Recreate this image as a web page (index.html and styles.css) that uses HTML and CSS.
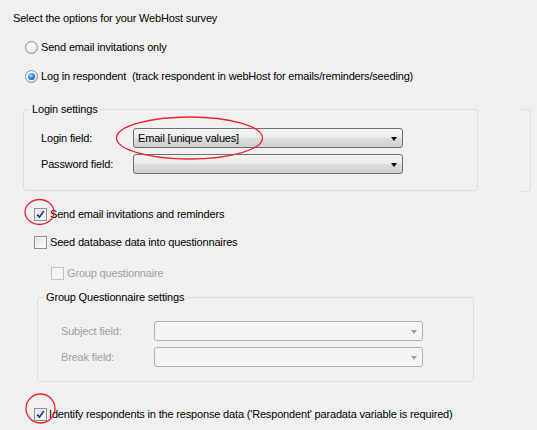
FILE: index.html
```html
<!DOCTYPE html>
<html>
<head>
<meta charset="utf-8">
<link rel="stylesheet" href="styles.css">
</head>
<body>
<div class="page">
  <div class="row title">Select the options for your WebHost survey</div>

  <div class="row radio-row r1"><span class="radio"></span><span class="lbl">Send email invitations only</span></div>
  <div class="row radio-row r2"><span class="radio checked"><span class="dot"></span></span><span class="lbl">Log in respondent&nbsp; (track respondent in webHost for emails/reminders/seeding)</span></div>

  <div class="groups">
    <fieldset class="group login">
      <legend>Login settings</legend>
      <div class="inner">
        <div class="field">
          <span class="flabel">Login field:</span>
          <div class="combo"><span class="ctext">Email [unique values]</span><span class="arrow"></span></div>
        </div>
        <div class="field second">
          <span class="flabel">Password field:</span>
          <div class="combo"><span class="ctext"></span><span class="arrow"></span></div>
        </div>
      </div>
    </fieldset>
    <div class="partial"></div>
  </div>

  <div class="row check-row c1"><span class="check checked"><svg viewBox="0 0 9 9" width="9" height="9"><path d="M1.2 4.6 L3.4 7.2 L7.8 1" fill="none" stroke="#21388b" stroke-width="1.7"/></svg></span><span class="lbl gap3">Send email invitations and reminders</span></div>
  <div class="row check-row c2"><span class="check"></span><span class="lbl gap3">Seed database data into questionnaires</span></div>
  <div class="row check-row c3 disabled"><span class="check"></span><span class="lbl gap3">Group questionnaire</span></div>

  <fieldset class="group gq">
    <legend>Group Questionnaire settings</legend>
    <div class="inner">
      <div class="field dis">
        <span class="flabel">Subject field:</span>
        <div class="combo off"><span class="ctext"></span><span class="arrow"></span></div>
      </div>
      <div class="field second dis">
        <span class="flabel">Break field:</span>
        <div class="combo off"><span class="ctext"></span><span class="arrow"></span></div>
      </div>
    </div>
  </fieldset>

  <div class="row check-row c4"><span class="check checked"><svg viewBox="0 0 9 9" width="9" height="9"><path d="M1.2 4.6 L3.4 7.2 L7.8 1" fill="none" stroke="#21388b" stroke-width="1.7"/></svg></span><span class="lbl gap2">Identify respondents in the response data ('Respondent' paradata variable is required)</span></div>

  <svg class="marks" width="537" height="430" viewBox="0 0 537 430">
    <ellipse cx="189.5" cy="138" rx="73" ry="21" fill="none" stroke="#e8262b" stroke-width="1.3"/>
    <ellipse cx="39.5" cy="212" rx="14.5" ry="12.5" fill="none" stroke="#e8262b" stroke-width="1.3"/>
    <ellipse cx="40.5" cy="408.5" rx="14.5" ry="14.5" fill="none" stroke="#e8262b" stroke-width="1.3"/>
  </svg>
</div>
</body>
</html>
```

FILE: styles.css
```css
html, body {
  margin: 0;
  padding: 0;
  background: #f0f0f0;
}
body {
  font-family: "Liberation Sans", Arial, sans-serif;
  font-size: 11px;
  letter-spacing: -0.17px;
  color: #000;
}
.page {
  position: relative;
  width: 537px;
  height: 430px;
  overflow: hidden;
}
.row {
  height: 20px;
  display: flex;
  align-items: center;
  white-space: nowrap;
}
.title {
  margin-top: 8px;
  padding-left: 13px;
}
.radio-row {
  padding-left: 25px;
}
.r1 { margin-top: 9px; }
.r2 { margin-top: 9px; }
.radio {
  width: 11px;
  height: 11px;
  border-radius: 50%;
  border: 1px solid #8f8f8f;
  background: radial-gradient(circle at 40% 35%, #ffffff 0%, #f0f0f0 45%, #d2d2d2 100%);
  display: flex;
  align-items: center;
  justify-content: center;
  flex: none;
}
.radio .dot {
  width: 7px;
  height: 7px;
  border-radius: 50%;
  background: radial-gradient(circle at 40% 35%, #a8e4ff 0%, #2a8fd8 45%, #0b3f7a 100%);
}
.radio-row .lbl {
  margin-left: 3px;
}

.groups {
  display: flex;
  align-items: flex-start;
  margin-top: 16px;
}
.group {
  margin: 0;
  padding: 0;
  border: 1px solid #d5dfe5;
  border-radius: 3px;
  box-sizing: border-box;
  min-width: 0;
}
.group legend {
  padding: 0 2px;
  margin-left: 6px;
  line-height: 14px;
  height: 14px;
}
.login {
  margin-left: 23px;
  width: 455px;
}
.login .inner {
  padding: 12px 0 16px 17px;
}
.partial {
  margin-left: 43px;
  margin-top: 7px;
  width: 10px;
  height: 83px;
  box-sizing: border-box;
  border: 1px solid #d5dfe5;
  border-left: none;
  border-radius: 0 3px 3px 0;
}
.field {
  display: flex;
  align-items: center;
  height: 20px;
}
.field.second {
  margin-top: 6px;
}
.login .flabel {
  width: 92px;
  flex: none;
}
.combo {
  width: 270px;
  height: 20px;
  box-sizing: border-box;
  border: 1px solid #707070;
  border-radius: 3px;
  background: linear-gradient(to bottom, #f3f3f3 0%, #ebebeb 50%, #dddddd 50%, #cfcfcf 100%);
  display: flex;
  align-items: center;
  justify-content: space-between;
  padding: 0 5px 0 4px;
  flex: none;
}
.arrow {
  width: 0;
  height: 0;
  border-left: 3.5px solid transparent;
  border-right: 3.5px solid transparent;
  border-top: 4px solid #000;
  margin-top: 1px;
}

.check-row {
  padding-left: 34px;
}
.c1 { margin-top: 12px; }
.c2 { margin-top: 8px; }
.c3 { margin-top: 11px; padding-left: 51px; }
.check {
  width: 13px;
  height: 13px;
  box-sizing: border-box;
  border: 1px solid #8e8f8f;
  background: linear-gradient(135deg, #dcdcdc 0%, #f4f4f4 60%, #ffffff 100%);
  box-shadow: inset 0 0 0 1px #f4f4f4;
  display: flex;
  align-items: center;
  justify-content: center;
  flex: none;
}
.check svg { display: block; }
.gap3 { margin-left: 3px; }
.gap2 { margin-left: 2px; }
.disabled { color: #a0a0a0; }
.disabled .check {
  border-color: #c2c2c2;
  background: #f4f4f4;
  box-shadow: none;
}

.gq {
  margin-top: 7px;
  margin-left: 37px;
  width: 437px;
}
.gq .inner {
  padding: 17px 0 14px 23px;
}
.gq .flabel {
  width: 93px;
  flex: none;
}
.dis { color: #a0a0a0; }
.combo.off {
  width: 269px;
  border-color: #adb2b5;
  background: #f4f4f4;
}
.combo.off .arrow {
  border-top-color: #a0a0a0;
}

.c4 { margin-top: 22px; }

.marks {
  position: absolute;
  left: 0;
  top: 0;
  pointer-events: none;
}
```
